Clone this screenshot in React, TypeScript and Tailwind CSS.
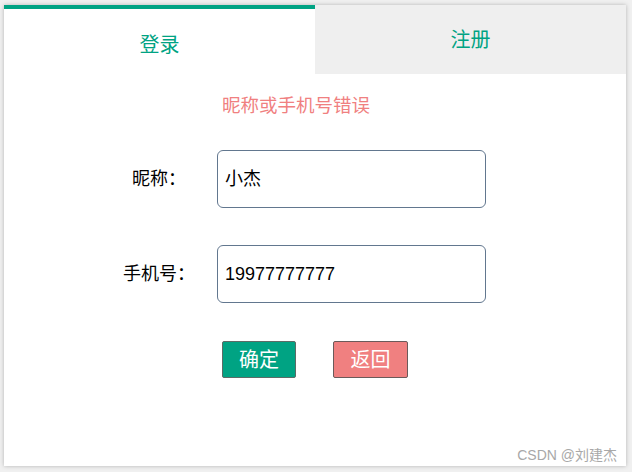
const FONT = { fontFamily: '"Liberation Sans", Arial, "Noto Sans CJK SC", sans-serif' };

function Field({ label, value }: { label: string; value: string }) {
  return (
    <div className="flex h-[58px] items-center pl-[97px]">
      <label className="w-[116px] text-center text-[18px] text-black">{label}</label>
      <div className="flex h-[58px] w-[269px] items-center rounded-[6px] border border-[#62778f] bg-white px-[7px] text-[18px] text-black">
        {value}
      </div>
    </div>
  );
}

export default function App() {
  return (
    <div className="relative h-[472px] w-[632px] bg-[#f0f0f0] pl-[4px] pt-[5px]" style={FONT}>
      <div className="flex h-[461px] w-[622px] flex-col bg-white shadow-[0_0_4px_rgba(0,0,0,0.25)]">
        <div className="flex h-[69px]">
          <div className="flex flex-1 items-center justify-center border-t-4 border-[#00a383] pt-[6px] text-[20px] text-[#00a383]">
            登录
          </div>
          <div className="flex flex-1 items-center justify-center bg-[#efefef] text-[20px] text-[#00a383]">
            注册
          </div>
        </div>

        <div className="flex h-[64px] items-center pl-[218px] text-[18.5px] text-[#f08080]">昵称或手机号错误</div>

        <div className="mt-[12px] flex flex-col gap-[37px]">
          <Field label="昵称：" value="小杰" />
          <Field label="手机号：" value="19977777777" />
        </div>

        <div className="mt-[38px] flex justify-center gap-[37px]">
          <button className="h-[37px] w-[74px] rounded-[2px] border border-[#5d6b66] bg-[#00a383] text-[20px] text-white">
            确定
          </button>
          <button className="h-[37px] w-[75px] rounded-[2px] border border-[#6b5a5a] bg-[#f08080] text-[20px] text-white">
            返回
          </button>
        </div>
      </div>
      <span className="absolute right-[15px] top-[445px] text-[14px] text-[#a8a8a8]">CSDN @刘建杰</span>
    </div>
  );
}
